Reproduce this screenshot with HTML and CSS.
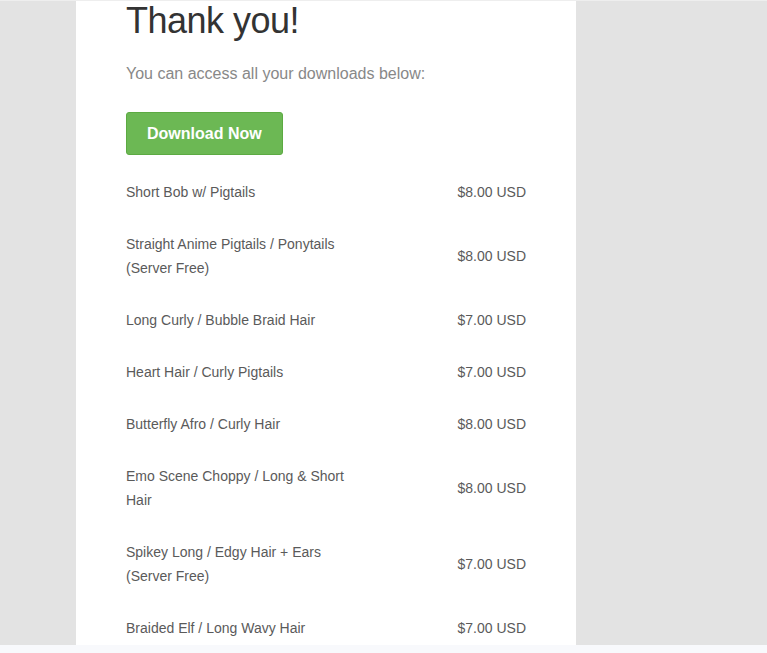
FILE: index.html
```html
<!DOCTYPE html>
<html>
<head>
<meta charset="utf-8">
<link rel="stylesheet" href="styles.css">
</head>
<body>
<div class="topline"></div>
<main class="stage">
  <section class="card">
    <h1 class="title">Thank you!</h1>
    <p class="lead">You can access all your downloads below:</p>
    <a class="btn" href="#">Download Now</a>
    <table class="items">
      <tr><td class="name">Short Bob w/ Pigtails</td><td class="price">$8.00 USD</td></tr>
      <tr><td class="name">Straight Anime Pigtails / Ponytails (Server Free)</td><td class="price">$8.00 USD</td></tr>
      <tr><td class="name">Long Curly / Bubble Braid Hair</td><td class="price">$7.00 USD</td></tr>
      <tr><td class="name">Heart Hair / Curly Pigtails</td><td class="price">$7.00 USD</td></tr>
      <tr><td class="name">Butterfly Afro / Curly Hair</td><td class="price">$8.00 USD</td></tr>
      <tr><td class="name">Emo Scene Choppy / Long &amp; Short Hair</td><td class="price">$8.00 USD</td></tr>
      <tr><td class="name">Spikey Long / Edgy Hair + Ears (Server Free)</td><td class="price">$7.00 USD</td></tr>
      <tr><td class="name">Braided Elf / Long Wavy Hair</td><td class="price">$7.00 USD</td></tr>
    </table>
  </section>
</main>
<div class="footer"></div>
</body>
</html>
```

FILE: styles.css
```css
html, body {
  margin: 0;
  padding: 0;
  height: 100%;
}
body {
  display: flex;
  flex-direction: column;
  background: #e3e3e3;
  font-family: "Liberation Sans", Arial, sans-serif;
  overflow: hidden;
}
.topline {
  height: 1px;
  background: #eeeeee;
  flex: none;
}
.stage {
  flex: 1;
  min-height: 0;
  overflow: hidden;
  padding-left: 76px;
}
.card {
  width: 400px;
  padding: 0 50px 40px;
  background: #ffffff;
  min-height: 100%;
}
.title {
  margin: 0;
  font-size: 36px;
  line-height: 40px;
  font-weight: normal;
  color: #333333;
  letter-spacing: -0.5px;
}
.lead {
  margin: 21px 0 0;
  font-size: 16px;
  line-height: 24px;
  color: #888888;
}
.btn {
  display: inline-block;
  margin-top: 26px;
  padding: 11px 20px;
  font-size: 16px;
  line-height: 19px;
  font-weight: bold;
  color: #ffffff;
  text-decoration: none;
  background: #6cb854;
  border: 1px solid #5caa42;
  border-radius: 3px;
}
.items {
  margin-top: 11px;
  width: 400px;
  border-collapse: collapse;
}
.items td {
  padding: 14px 0;
  font-size: 14px;
  line-height: 24px;
  color: #5a5a5a;
  vertical-align: middle;
}
.items .name {
  width: 240px;
}
.items .price {
  text-align: right;
}
.footer {
  height: 8px;
  flex: none;
  background: #f8f9fc;
}
```
